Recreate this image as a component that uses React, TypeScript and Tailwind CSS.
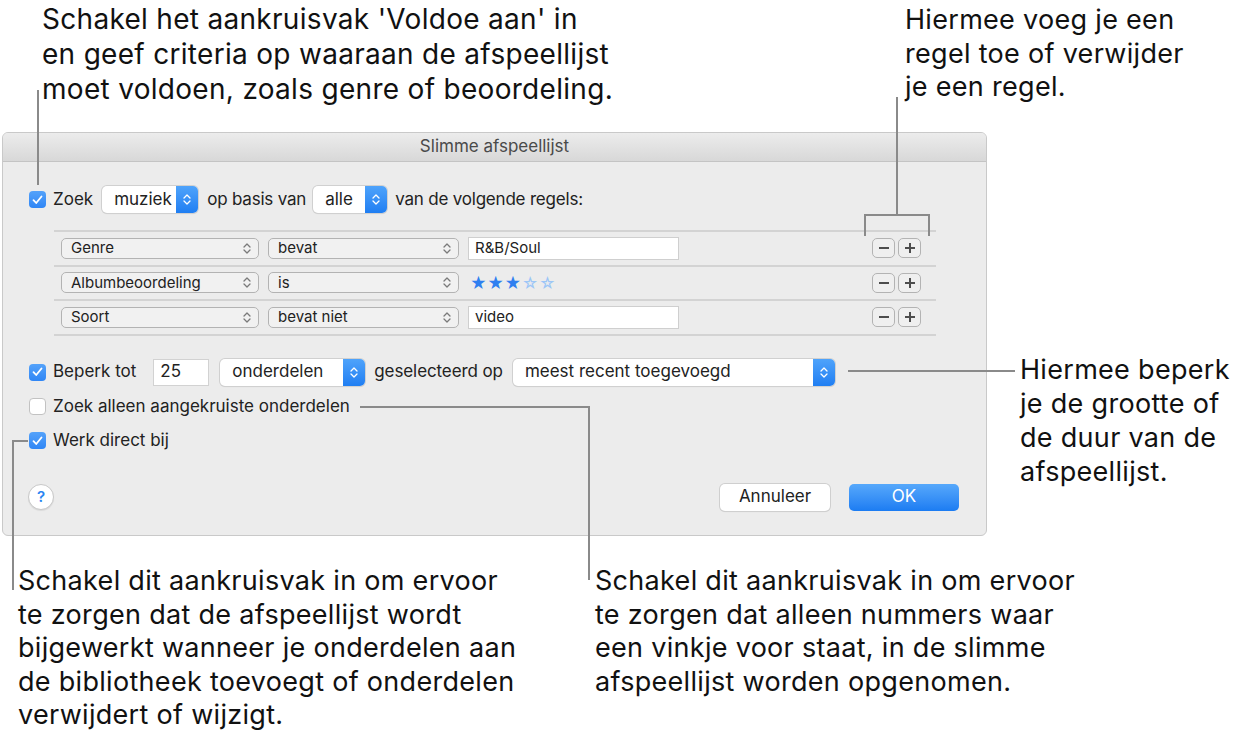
import React from "react";

function Chevrons({ white }: { white?: boolean }) {
  return (
    <svg width="8" height="13" viewBox="0 0 8 13" fill="none">
      <path d="M1 5 L4 2 L7 5" stroke={white ? "#fff" : "#7a7a7a"} strokeWidth="1.3" strokeLinecap="round" strokeLinejoin="round" />
      <path d="M1 8 L4 11 L7 8" stroke={white ? "#fff" : "#7a7a7a"} strokeWidth="1.3" strokeLinecap="round" strokeLinejoin="round" />
    </svg>
  );
}

function Check({ on }: { on: boolean }) {
  if (!on)
    return <div className="w-[17px] h-[17px] rounded-[4px] bg-white border border-[#c2c2c2] shrink-0" />;
  return (
    <div className="w-[17px] h-[17px] rounded-[4px] bg-gradient-to-b from-[#54a2fa] to-[#2f86f5] flex items-center justify-center shrink-0">
      <svg width="11" height="10" viewBox="0 0 11 10" fill="none">
        <path d="M1.5 5.2 L4.2 8 L9.5 1.5" stroke="#fff" strokeWidth="1.8" strokeLinecap="round" strokeLinejoin="round" />
      </svg>
    </div>
  );
}

// white popup with blue stepper section
function BluePopup({ label, w }: { label: string; w: string }) {
  return (
    <div className={`${w} h-[27px] flex rounded-[5px] bg-white shadow-[0_0_0_1px_#d0d0d0,0_1px_1px_rgba(0,0,0,0.12)] overflow-hidden`}>
      <div className="flex-1 flex items-center pl-[12px] text-[17px] text-[#222]">{label}</div>
      <div className="w-[22px] bg-gradient-to-b from-[#4ea3fb] to-[#1f7ef2] flex items-center justify-center">
        <Chevrons white />
      </div>
    </div>
  );
}

// grey rule popup
function RulePopup({ label, w }: { label: string; w: string }) {
  return (
    <div className={`${w} h-[21px] flex items-center justify-between rounded-[5px] border border-[#b3b3b3] bg-[#f1f1f1] pl-[9px] pr-[7px] text-[15px] text-[#222]`}>
      <span>{label}</span>
      <Chevrons />
    </div>
  );
}

function PlusMinus() {
  return (
    <div className="ml-auto mr-[15px] flex gap-[3px]">
      <div className="w-[23px] h-[20px] rounded-[5px] border border-[#b3b3b3] bg-[#efefef] flex items-center justify-center">
        <div className="w-[10px] h-[2px] bg-[#4d4d4d]" />
      </div>
      <div className="w-[23px] h-[20px] rounded-[5px] border border-[#b3b3b3] bg-[#efefef] flex items-center justify-center relative">
        <div className="w-[10px] h-[2px] bg-[#4d4d4d]" />
        <div className="absolute w-[2px] h-[10px] bg-[#4d4d4d]" />
      </div>
    </div>
  );
}

export default function App() {
  const rules = [
    { a: "Genre", b: "bevat", v: "R&B/Soul" },
    { a: "Albumbeoordeling", b: "is", v: null },
    { a: "Soort", b: "bevat niet", v: "video" },
  ];

  return (
    <div className="w-[1234px] h-[732px] relative bg-white overflow-hidden font-['Inter','Liberation_Sans',sans-serif] text-[#111]">
      {/* TOP NOTES */}
      <div className="flex h-[132px] text-[27px] tracking-[0.3px]">
        <div className="w-[905px] pl-[42px] pt-[2px] text-[28px] leading-[35px]">
          Schakel het aankruisvak 'Voldoe aan' in
          <br />
          en geef criteria op waaraan de afspeellijst
          <br />
          moet voldoen, zoals genre of beoordeling.
        </div>
        <div className="pt-[3px] leading-[33.5px]">
          Hiermee voeg je een
          <br />
          regel toe of verwijder
          <br />
          je een regel.
        </div>
      </div>

      {/* DIALOG + RIGHT NOTE */}
      <div className="flex">
        <div className="ml-[2px] w-[985px] h-[404px] rounded-[6px] border border-[#c9c9c9] bg-[#ececec] overflow-hidden flex flex-col">
          <div className="h-[29px] shrink-0 bg-gradient-to-b from-[#ececec] to-[#d8d8d8] border-b border-[#c4c4c4] flex items-center justify-center text-[17px] text-[#4a4a4a]">
            Slimme afspeellijst
          </div>

          {/* match row */}
          <div className="mt-[24px] h-[27px] flex items-center pl-[26px] text-[17px] text-[#222]">
            <Check on />
            <span className="ml-[7px]">Zoek</span>
            <div className="ml-[9px]">
              <BluePopup label="muziek" w="w-[96px]" />
            </div>
            <span className="ml-[9px] tracking-[-0.2px]">op basis van</span>
            <div className="ml-[7px]">
              <BluePopup label="alle" w="w-[74px]" />
            </div>
            <span className="ml-[8px] tracking-[-0.2px]">van de volgende regels:</span>
          </div>

          {/* rules */}
          <div className="mt-[17px] ml-[51px] w-[882px] border-t-2 border-[#d3d3d3]">
            {rules.map((r, i) => (
              <div key={i} className="h-[34.5px] border-b-2 border-[#d3d3d3] flex items-center pl-[7px]">
                <RulePopup label={r.a} w="w-[198px]" />
                <div className="ml-[9px]">
                  <RulePopup label={r.b} w="w-[191px]" />
                </div>
                {r.v ? (
                  <div className="ml-[9px] w-[211px] h-[23px] bg-white border border-[#cfcfcf] flex items-center pl-[6px] text-[15px] text-[#222]">
                    {r.v}
                  </div>
                ) : (
                  <div className="ml-[11px] flex text-[16px] leading-none tracking-[0.5px]">
                    <span className="text-[#2f7ff0]">★★★</span>
                    <span className="text-[#9cc6f7]">☆☆</span>
                  </div>
                )}
                <PlusMinus />
              </div>
            ))}
          </div>

          {/* limit row */}
          <div className="mt-[23px] h-[27px] flex items-center pl-[26px] text-[17px] text-[#222]">
            <Check on />
            <span className="ml-[7px]">Beperk tot</span>
            <div className="ml-[17px] w-[56px] h-[27px] bg-white border border-[#d2d2d2] flex items-center pl-[6px]">25</div>
            <div className="ml-[11px]">
              <BluePopup label="onderdelen" w="w-[145px]" />
            </div>
            <span className="ml-[9px] tracking-[-0.1px]">geselecteerd op</span>
            <div className="ml-[10px]">
              <BluePopup label="meest recent toegevoegd" w="w-[322px]" />
            </div>
          </div>

          <div className="mt-[10px] h-[22px] flex items-center pl-[26px] text-[17px] text-[#222]">
            <Check on={false} />
            <span className="ml-[7px]">Zoek alleen aangekruiste onderdelen</span>
          </div>
          <div className="mt-[12px] h-[22px] flex items-center pl-[26px] text-[17px] text-[#222]">
            <Check on />
            <span className="ml-[7px]">Werk direct bij</span>
          </div>

          {/* buttons */}
          <div className="mt-[32px] flex items-center pl-[25px] pr-[27px]">
            <div className="w-[26px] h-[26px] rounded-full bg-white border border-[#c8c8c8] shadow-[0_1px_1px_rgba(0,0,0,0.08)] flex items-center justify-center text-[15px] font-semibold text-[#2a84f2]">
              ?
            </div>
            <div className="ml-auto w-[110px] h-[27px] rounded-[5px] bg-white shadow-[0_0_0_1px_#cfcfcf,0_1px_1px_rgba(0,0,0,0.12)] flex items-center justify-center text-[17px] text-[#222]">
              Annuleer
            </div>
            <div className="ml-[19px] w-[110px] h-[27px] rounded-[5px] bg-gradient-to-b from-[#56a8fb] to-[#1b7cf2] flex items-center justify-center text-[17px] text-white">
              OK
            </div>
          </div>
        </div>

        <div className="ml-[33px] mt-[221px] text-[27px] tracking-[0.3px] leading-[34px]">
          Hiermee beperk
          <br />
          je de grootte of
          <br />
          de duur van de
          <br />
          afspeellijst.
        </div>
      </div>

      {/* BOTTOM NOTES */}
      <div className="flex mt-[28px] text-[27px] tracking-[0.3px] leading-[33.5px]">
        <div className="w-[595px] pl-[18px]">
          Schakel dit aankruisvak in om ervoor
          <br />
          te zorgen dat de afspeellijst wordt
          <br />
          bijgewerkt wanneer je onderdelen aan
          <br />
          de bibliotheek toevoegt of onderdelen
          <br />
          verwijdert of wijzigt.
        </div>
        <div>
          Schakel dit aankruisvak in om ervoor
          <br />
          te zorgen dat alleen nummers waar
          <br />
          een vinkje voor staat, in de slimme
          <br />
          afspeellijst worden opgenomen.
        </div>
      </div>

      {/* LEADER LINES */}
      <div className="absolute left-[37px] top-[90px] w-[2px] h-[95px] bg-[#8a8a8a]" />
      <div className="absolute left-[896px] top-[97px] w-[2px] h-[118px] bg-[#8a8a8a]" />
      <div className="absolute left-[864px] top-[214px] w-[66px] h-[2px] bg-[#8a8a8a]" />
      <div className="absolute left-[864px] top-[214px] w-[2px] h-[22px] bg-[#8a8a8a]" />
      <div className="absolute left-[928px] top-[214px] w-[2px] h-[22px] bg-[#8a8a8a]" />
      <div className="absolute left-[848px] top-[370px] w-[167px] h-[2px] bg-[#8a8a8a]" />
      <div className="absolute left-[360px] top-[406px] w-[230px] h-[2px] bg-[#8a8a8a]" />
      <div className="absolute left-[588px] top-[406px] w-[2px] h-[174px] bg-[#8a8a8a]" />
      <div className="absolute left-[12px] top-[440px] w-[16px] h-[2px] bg-[#8a8a8a]" />
      <div className="absolute left-[12px] top-[440px] w-[2px] h-[150px] bg-[#8a8a8a]" />
    </div>
  );
}
